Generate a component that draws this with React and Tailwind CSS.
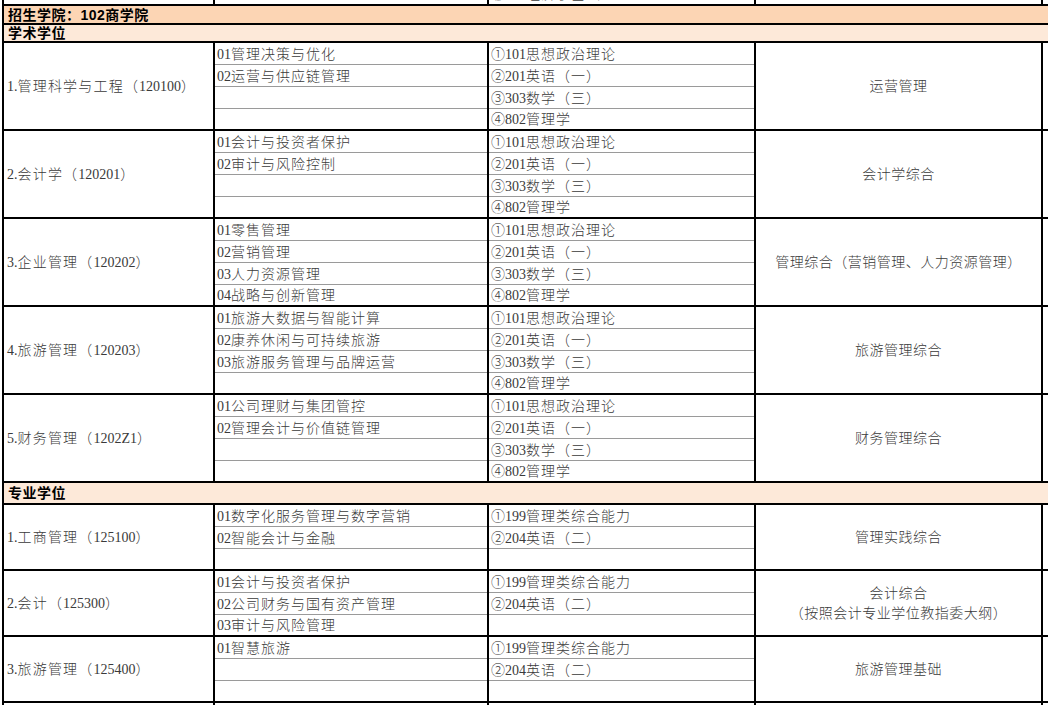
import React from "react";

const RE = /([\u3000-\u303f\u4e00-\u9fff\uff00-\uffef]+)/;

function T({ s, cjk }) {
  const parts = s.split(RE);
  return (
    <>
      {parts.map((p, i) =>
        i % 2 === 1 ? (
          <span key={i} className={cjk}>
            {p}
          </span>
        ) : (
          <span key={i}>{p}</span>
        )
      )}
    </>
  );
}

const EX1 = ["①101思想政治理论", "②201英语（一）", "③303数学（三）", "④802管理学"];
const EX2 = ["①199管理类综合能力", "②204英语（二）", ""];

const academic = [
  { name: "1.管理科学与工程（120100）", dirs: ["01管理决策与优化", "02运营与供应链管理"], ex: EX1, sub: ["运营管理"] },
  { name: "2.会计学（120201）", dirs: ["01会计与投资者保护", "02审计与风险控制"], ex: EX1, sub: ["会计学综合"] },
  { name: "3.企业管理（120202）", dirs: ["01零售管理", "02营销管理", "03人力资源管理", "04战略与创新管理"], ex: EX1, sub: ["管理综合（营销管理、人力资源管理）"] },
  { name: "4.旅游管理（120203）", dirs: ["01旅游大数据与智能计算", "02康养休闲与可持续旅游", "03旅游服务管理与品牌运营"], ex: EX1, sub: ["旅游管理综合"] },
  { name: "5.财务管理（1202Z1）", dirs: ["01公司理财与集团管控", "02管理会计与价值链管理"], ex: EX1, sub: ["财务管理综合"] },
];

const professional = [
  { name: "1.工商管理（125100）", dirs: ["01数字化服务管理与数字营销", "02智能会计与金融"], ex: EX2, sub: ["管理实践综合"] },
  { name: "2.会计（125300）", dirs: ["01会计与投资者保护", "02公司财务与国有资产管理", "03审计与风险管理"], ex: EX2, sub: ["会计综合", "（按照会计专业学位教指委大纲）"] },
  { name: "3.旅游管理（125400）", dirs: ["01智慧旅游"], ex: EX2, sub: ["旅游管理基础"] },
];

function SubCol({ items, n, width }) {
  const rows = [];
  for (let i = 0; i < n; i++) {
    const last = i === n - 1;
    rows.push(
      <div
        key={i}
        className={
          last
            ? "h-[20px] flex items-center pl-[2px] pt-[1px] whitespace-nowrap overflow-hidden"
            : "h-[22px] flex items-center pl-[2px] pt-[2px] border-b border-[#9a9a9a] whitespace-nowrap overflow-hidden"
        }
      >
        <T s={items[i] || ""} cjk="tracking-[1px]" />
      </div>
    );
  }
  return <div className={width + " shrink-0 flex flex-col border-r-2 border-black"}>{rows}</div>;
}

function Group({ g, n }) {
  return (
    <div className="flex border-b-2 border-black">
      <div className="w-[211px] shrink-0 flex items-center pl-[3px] pt-[1px] border-r-2 border-black whitespace-nowrap">
        <T s={g.name} cjk="tracking-[1.2px]" />
      </div>
      <SubCol items={g.dirs} n={n} width="w-[274px]" />
      <SubCol items={g.ex} n={n} width="w-[267px]" />
      <div className="w-[287px] shrink-0 flex flex-col items-center justify-center pt-[2px] border-r-2 border-black leading-[20px]">
        {g.sub.map((s, i) => (
          <div key={i} className="whitespace-nowrap">
            <T s={s} cjk="tracking-[0.5px]" />
          </div>
        ))}
      </div>
      <div className="flex-1" />
    </div>
  );
}

function Header({ text, bg, h }) {
  return (
    <div className={"flex items-center pl-[4px] pt-[1px] border-b-2 border-black font-['Liberation_Sans','Noto_Sans_CJK_SC',sans-serif] font-bold text-black text-[14px] tracking-[0.5px] " + bg + " " + h}>
      {text}
    </div>
  );
}

export default function App() {
  return (
    <div className="w-[1048px] h-[705px] overflow-hidden bg-white font-['Liberation_Serif','Noto_Sans_CJK_SC',serif] font-light text-[14px] text-[#3a3a3a]">
      <div className="-mt-[15px] pl-[2px]">
        <div className="border-l-2 border-black">
          <div className="flex h-[21px] border-b-2 border-black">
            <div className="w-[211px] shrink-0 border-r-2 border-black" />
            <div className="w-[274px] shrink-0 border-r-2 border-black" />
            <div className="w-[267px] shrink-0 border-r-2 border-black flex items-center pl-[2px] whitespace-nowrap">
              <T s="④801经济学基础" cjk="tracking-[1px]" />
            </div>
            <div className="w-[287px] shrink-0 border-r-2 border-black" />
            <div className="flex-1" />
          </div>
          <Header text="招生学院：102商学院" bg="bg-[#fcd5b4]" h="h-[19px]" />
          <Header text="学术学位" bg="bg-[#fde9d9]" h="h-[18px]" />
          {academic.map((g, i) => (
            <Group key={i} g={g} n={4} />
          ))}
          <Header text="专业学位" bg="bg-[#fde9d9]" h="h-[22px]" />
          {professional.map((g, i) => (
            <Group key={i} g={g} n={3} />
          ))}
          <div className="flex h-[22px]">
            <div className="w-[211px] shrink-0 border-r-2 border-black" />
            <div className="w-[274px] shrink-0 border-r-2 border-black" />
            <div className="w-[267px] shrink-0 border-r-2 border-black" />
            <div className="w-[287px] shrink-0 border-r-2 border-black" />
            <div className="flex-1" />
          </div>
        </div>
      </div>
    </div>
  );
}
